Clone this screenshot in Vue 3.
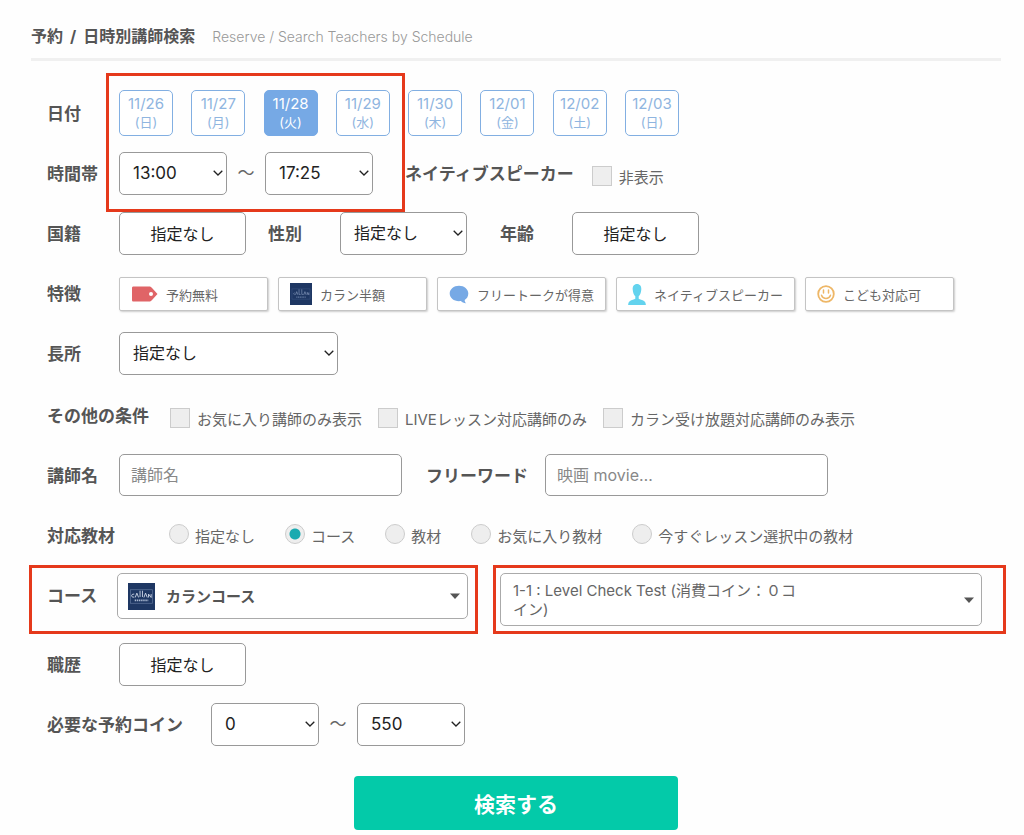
<script setup>
import { ref } from 'vue'

const dates = [
  { day: '11/26', week: '(日)' },
  { day: '11/27', week: '(月)' },
  { day: '11/28', week: '(火)' },
  { day: '11/29', week: '(水)' },
  { day: '11/30', week: '(木)' },
  { day: '12/01', week: '(金)' },
  { day: '12/02', week: '(土)' },
  { day: '12/03', week: '(日)' },
]
const selectedDate = ref('11/28')

const features = [
  { icon: 'tag', text: '予約無料', size: 'small' },
  { icon: 'callan', text: 'カラン半額', size: 'small' },
  { icon: 'talk', text: 'フリートークが得意', size: 'medium' },
  { icon: 'person', text: 'ネイティブスピーカー', size: 'large' },
  { icon: 'smile', text: 'こども対応可', size: 'small' },
]

const conditions = [
  'お気に入り講師のみ表示',
  'LIVEレッスン対応講師のみ',
  'カラン受け放題対応講師のみ表示',
]

const materials = ['指定なし', 'コース', '教材', 'お気に入り教材', '今すぐレッスン選択中の教材']
const material = ref('コース')
</script>

<template>
  <main class="page">
    <header class="head">
      <h1><span>予約</span><span>/</span><span>日時別講師検索</span></h1>
      <span class="sub">Reserve / Search Teachers by Schedule</span>
    </header>

    <form @submit.prevent>
      <div class="schedule">
        <div class="row">
          <span class="label">日付</span>
          <div class="dates">
            <button
              v-for="d in dates"
              :key="d.day"
              type="button"
              class="date"
              :class="{ active: d.day === selectedDate }"
              @click="selectedDate = d.day"
            >
              <span class="day">{{ d.day }}</span>
              <span class="week">{{ d.week }}</span>
            </button>
          </div>
        </div>
        <div class="row">
          <label class="label" for="from">時間帯</label>
          <span class="select w-s">
            <select id="from"><option>13:00</option></select>
            <svg class="chev" viewBox="0 0 10 6"><path d="M0.7 0.7 5 5 9.3 0.7" /></svg>
          </span>
          <span class="tilde">〜</span>
          <span class="select w-s">
            <select aria-label="終了時間"><option>17:25</option></select>
            <svg class="chev" viewBox="0 0 10 6"><path d="M0.7 0.7 5 5 9.3 0.7" /></svg>
          </span>
          <span class="label native">ネイティブスピーカー</span>
          <label class="check"><input type="checkbox" /><span>非表示</span></label>
        </div>
        <div class="mark mark-schedule"></div>
      </div>

      <div class="row">
        <span class="label">国籍</span>
        <button type="button" class="pick">指定なし</button>
        <label class="label gender" for="gender">性別</label>
        <span class="select w-m">
          <select id="gender"><option>指定なし</option></select>
          <svg class="chev" viewBox="0 0 10 6"><path d="M0.7 0.7 5 5 9.3 0.7" /></svg>
        </span>
        <span class="label age">年齢</span>
        <button type="button" class="pick">指定なし</button>
      </div>

      <div class="row">
        <span class="label">特徴</span>
        <div class="features">
          <button v-for="f in features" :key="f.text" type="button" class="feature" :class="f.size">
            <svg v-if="f.icon === 'tag'" width="27" height="16" viewBox="0 0 27 16">
              <path d="M2.5 .5H18c1.3 0 2 .4 2.800 1.300L26.500 8l-5.700 6.200C20 15.100 19.300 15.500 18 15.500H2.500C1.500 15.500 1 15 1 14V2C1 1 1.500 .5 2.500 .5Z" fill="#e06467" />
              <circle cx="20" cy="8" r="2" fill="#fff" />
            </svg>
            <svg v-else-if="f.icon === 'callan'" width="22" height="22" viewBox="0 0 28 28">
              <rect width="28" height="28" fill="#1e3763" />
              <rect x="2.500" y="7.500" width="23" height="13" fill="none" stroke="#3b5580" stroke-width=".7" />
              <path d="M6 12.500Q3 13.500 6 15M7 15l1.500-4 1.500 4M11.500 8v6.500h2M15 8v6.500h2M17.500 15l1.500-4 1.500 4M22 15v-3l2 3v-3" fill="none" stroke="#8b9fc0" stroke-width=".8" />
              <path d="M8 18h12" stroke="#647ba2" stroke-width="1.500" stroke-dasharray="1.500 .7" />
            </svg>
            <svg v-else-if="f.icon === 'talk'" width="20" height="19" viewBox="0 0 20 19">
              <path d="M10 .7c5.200 0 9.300 3.400 9.300 7.800 0 3-1.500 5.200-3.600 6.500-.1 1.300.5 2.500 1.500 3.300-2.200.1-4-.8-5.200-2.200-.6.100-1.300.1-2 .1C4.800 16.200.7 12.800.7 8.500.7 4.100 4.800.7 10 .7Z" fill="#76a9e5" />
            </svg>
            <svg v-else-if="f.icon === 'person'" width="18" height="21" viewBox="0 0 18 21">
              <path d="M9 0c3 0 4.500 2.300 4.300 5.500C13.100 9 12 11 10.700 12.200v2.500c1 1 3.800 1.200 5.300 2.200 1.300.8 1.700 2 1.900 4.100H.1c.2-2.100.6-3.300 1.900-4.100 1.500-1 4.300-1.200 5.300-2.200v-2.500C6 11 4.900 9 4.700 5.500 4.500 2.300 6 0 9 0Z" fill="#63d3ee" />
            </svg>
            <svg v-else width="18" height="18" viewBox="0 0 18 18">
              <circle cx="9" cy="9" r="7.800" fill="none" stroke="#eeb767" stroke-width="1.800" />
              <path d="M6.500 5v3M11.500 5v3M4.500 10.300c1.600 4.400 7.400 4.400 9 0" fill="none" stroke="#eeb767" stroke-width="1.500" stroke-linecap="round" />
            </svg>
            <span>{{ f.text }}</span>
          </button>
        </div>
      </div>

      <div class="row">
        <label class="label" for="strong">長所</label>
        <span class="select w-l">
          <select id="strong"><option>指定なし</option></select>
          <svg class="chev" viewBox="0 0 10 6"><path d="M0.7 0.7 5 5 9.3 0.7" /></svg>
        </span>
      </div>

      <div class="row row-conditions">
        <span class="label">その他の条件</span>
        <div class="conditions">
          <label v-for="c in conditions" :key="c" class="check"><input type="checkbox" /><span>{{ c }}</span></label>
        </div>
      </div>

      <div class="row">
        <label class="label" for="teacher">講師名</label>
        <input id="teacher" class="text" type="text" placeholder="講師名" />
        <label class="label word" for="word">フリーワード</label>
        <input id="word" class="text" type="text" placeholder="映画 movie…" />
      </div>

      <div class="row">
        <span class="label">対応教材</span>
        <div class="materials">
          <label v-for="m in materials" :key="m" class="radio">
            <input v-model="material" type="radio" name="material" :value="m" /><span>{{ m }}</span>
          </label>
        </div>
      </div>

      <div class="course">
        <div class="mark mark-course">
          <label class="label" for="course">コース</label>
          <span class="select course-select">
            <svg class="logo" viewBox="0 0 28 28">
              <rect width="28" height="28" fill="#1e3763" />
              <rect x="2.500" y="7" width="23" height="14" fill="none" stroke="#61789e" stroke-width=".7" />
              <path d="M6.500 11.500Q3 11.500 4 14 5 15.200 6.500 14.500M7.500 15l1.700-4.500L11 15M12.500 8v6.500M15 8v6.500M16.500 15l1.700-4.500L20 15M21.300 15v-3.500l2.700 3.500v-3.500" fill="none" stroke="#d5deed" stroke-width=".9" />
              <path d="M7 18h14" stroke="#a9b8d0" stroke-width="1.600" stroke-dasharray="1.500 .7" />
            </svg>
            <select id="course"><option>カランコース</option></select>
            <svg class="caret" viewBox="0 0 10 6"><path d="M0 .5h10L5 6Z" /></svg>
          </span>
        </div>
        <div class="mark mark-lesson">
          <span class="select lesson-select">
            <select aria-label="レッスン"><option>1-1 : Level Check Test (消費コイン：０コイン)</option></select>
            <svg class="caret" viewBox="0 0 10 6"><path d="M0 .5h10L5 6Z" /></svg>
          </span>
        </div>
      </div>

      <div class="row">
        <span class="label">職歴</span>
        <button type="button" class="pick">指定なし</button>
      </div>

      <div class="row">
        <label class="label coin" for="coin">必要な予約コイン</label>
        <span class="select w-s">
          <select id="coin"><option>0</option></select>
          <svg class="chev" viewBox="0 0 10 6"><path d="M0.7 0.7 5 5 9.3 0.7" /></svg>
        </span>
        <span class="tilde">〜</span>
        <span class="select w-s">
          <select aria-label="コイン上限"><option>550</option></select>
          <svg class="chev" viewBox="0 0 10 6"><path d="M0.7 0.7 5 5 9.3 0.7" /></svg>
        </span>
      </div>

      <div class="actions">
        <button type="submit" class="submit">検索する</button>
      </div>
    </form>
  </main>
</template>

<style>
body {
  background: #fefefe;
}
</style>

<style scoped>
.page,
.page button,
.page select,
.page input {
  font-family: Inter, "Noto Sans CJK JP", sans-serif;
}
.page {
  color: #666;
  font-size: 15px;
}
.page * {
  box-sizing: border-box;
}
button,
select,
input {
  margin: 0;
}
.head {
  display: flex;
  align-items: center;
  gap: 17px;
  height: 61px;
  margin: 0 23px 22px 31px;
  padding-top: 14px;
  border-bottom: 3px solid #f0f0f0;
}
h1 {
  display: flex;
  gap: 7px;
  margin: 0;
  font-size: 16px;
  line-height: 24px;
  font-weight: 700;
  color: #555;
}
.sub {
  font-size: 14px;
  font-weight: 300;
  color: #999;
}
.row {
  display: flex;
  align-items: center;
  height: 60px;
  padding-left: 47px;
}
.row-conditions {
  height: 62px;
  padding-top: 2px;
}
.label {
  flex: none;
  min-width: 72px;
  padding-top: 2px;
  font-size: 17px;
  line-height: 24px;
  font-weight: 700;
  color: #555;
  white-space: nowrap;
}
.schedule {
  position: relative;
}
.mark {
  border: 3px solid #e5391b;
}
.mark-schedule {
  position: absolute;
  left: 106px;
  top: -10px;
  width: 299px;
  height: 139px;
  pointer-events: none;
}
.dates {
  display: flex;
  justify-content: space-between;
  width: 560px;
}
.date {
  display: flex;
  flex-direction: column;
  align-items: center;
  justify-content: center;
  width: 54px;
  height: 46px;
  padding: 0;
  border: 1px solid #82afe2;
  border-radius: 5px;
  background: #fff;
  color: #8fb5e0;
  line-height: 18px;
}
.day {
  font-size: 15px;
}
.week {
  font-size: 13px;
}
.date.active {
  background: #76a9e5;
  border-color: #76a9e5;
  color: #fff;
}
.select {
  position: relative;
  flex: none;
}
select {
  display: block;
  appearance: none;
  width: 100%;
  height: 43px;
  padding: 0 13px;
  border: 1px solid #999;
  border-radius: 5px;
  background: #fff;
  color: #222;
  font-size: 16px;
}
.w-s {
  width: 108px;
}
.w-s select {
  font-size: 17px;
}
.w-m {
  width: 127px;
}
.w-l {
  width: 219px;
}
.chev,
.caret {
  position: absolute;
  top: 50%;
  right: 4px;
  width: 10px;
  height: 6px;
  margin-top: -3px;
  pointer-events: none;
}
.chev {
  fill: none;
  stroke: #222;
  stroke-width: 1.3;
}
.caret {
  right: 8px;
  fill: #555;
}
.tilde {
  width: 38px;
  padding-bottom: 4px;
  text-align: center;
  font-size: 17px;
}
.native {
  margin: 0 18px 0 32px;
}
.check,
.radio {
  display: flex;
  align-items: center;
  white-space: nowrap;
}
.check {
  gap: 7px;
  padding-top: 6px;
}
.check input,
.radio input {
  appearance: none;
  flex: none;
  width: 20px;
  height: 20px;
  border: 1px solid #ccc;
  background: #eee;
}
.radio input {
  margin-bottom: 3px;
  border-radius: 50%;
}
.radio input:checked {
  background: radial-gradient(circle, #1aaab0 5px, #eee 6px);
}
.pick {
  width: 127px;
  height: 43px;
  padding: 0;
  border: 1px solid #999;
  border-radius: 5px;
  background: #fff;
  color: #222;
  font-size: 16px;
}
.gender {
  margin-left: 22px;
}
.age {
  margin-left: 33px;
}
.features {
  display: flex;
  gap: 10px;
  padding-top: 2px;
}
.feature {
  display: flex;
  align-items: center;
  gap: 8px;
  width: 149px;
  height: 34px;
  padding: 0 0 0 11px;
  border: 1px solid #c4c4c4;
  border-radius: 2px;
  background: #fff;
  box-shadow: 1px 1px 2px #ccc;
  color: #666;
  font-size: 13px;
  white-space: nowrap;
}
.feature svg {
  flex: none;
}
.feature.medium {
  width: 169px;
}
.feature.large {
  width: 179px;
}
.conditions {
  display: flex;
  gap: 16px;
  margin-left: 21px;
}
.text {
  width: 283px;
  height: 42px;
  padding: 0 11px;
  border: 1px solid #999;
  border-radius: 5px;
  background: #fff;
  font-size: 16px;
}
.text::placeholder {
  color: #888;
}
.word {
  margin: 0 17px 0 24px;
}
.materials {
  display: flex;
  gap: 30px;
  margin-left: 50px;
}
.radio {
  gap: 6px;
}
.course {
  display: grid;
  grid-template-columns: 449px 1fr;
  gap: 15px;
  height: 69px;
  margin: 0 18px 0 29px;
}
.mark-course {
  display: flex;
  padding: 5px 7px 0 15px;
}
.mark-course .label {
  min-width: 70px;
  padding-top: 0;
  line-height: 46px;
}
.course-select {
  flex: 1;
}
.course-select select {
  height: 46px;
  padding-left: 48px;
  border-color: #aaa;
  color: #555;
  font-size: 15px;
  font-weight: 700;
}
.course-select .caret {
  top: 23px;
}
.logo {
  position: absolute;
  left: 11px;
  top: 10px;
  width: 27px;
  height: 27px;
}
.mark-lesson {
  padding: 5px 21px 0 4px;
}
.lesson-select select {
  height: 53px;
  padding: 0 176px 0 12px;
  border-color: #aaa;
  color: #666;
  font-size: 15px;
  line-height: 19px;
  white-space: normal;
}
.coin {
  width: 164px;
}
.actions {
  display: flex;
  justify-content: center;
  padding: 22px 23px 0 31px;
}
.submit {
  width: 324px;
  height: 54px;
  padding: 0;
  border: 0;
  border-radius: 4px;
  background: #03caa9;
  color: #fff;
  font-size: 21px;
  font-weight: 700;
}
</style>
